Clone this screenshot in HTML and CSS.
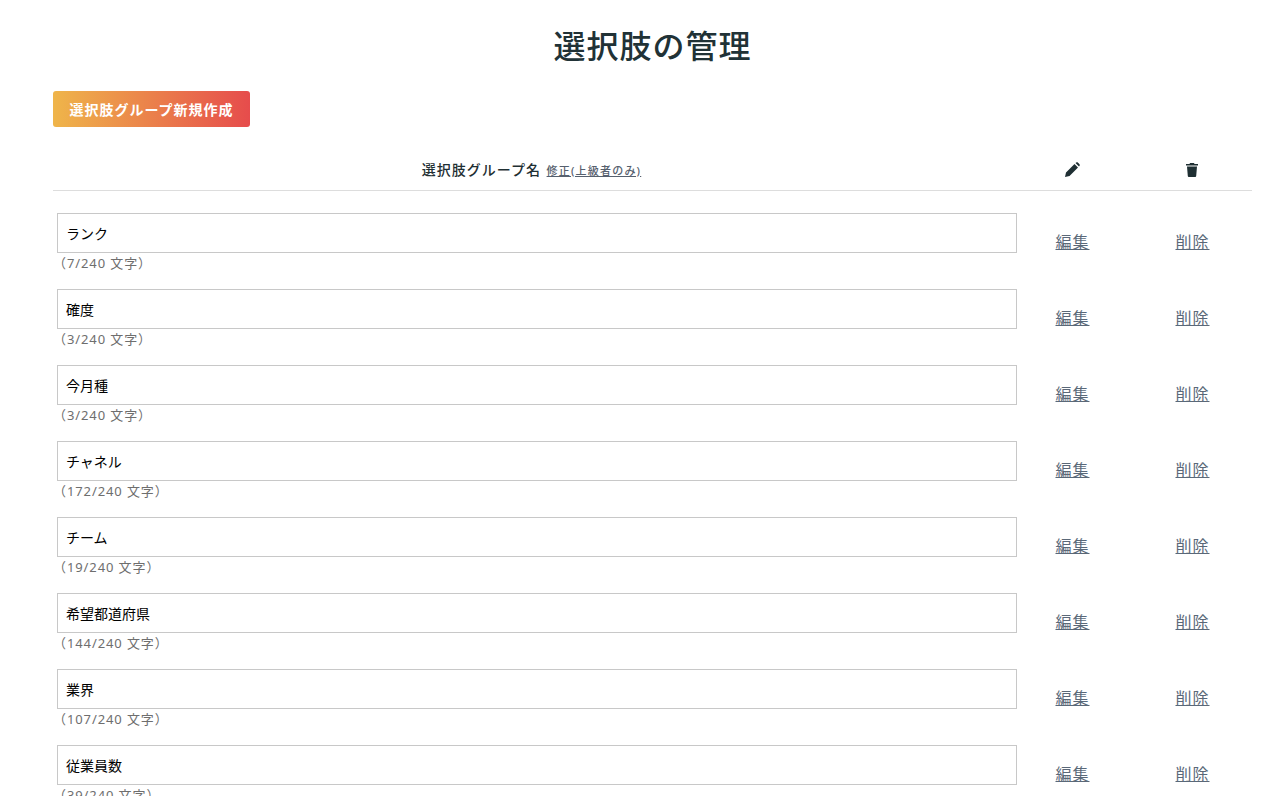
FILE: index.html
```html
<!DOCTYPE html>
<html lang="ja">
<head>
    <meta charset="UTF-8">
    <meta name="viewport" content="width=device-width, initial-scale=1.0">
    <title>選択肢の管理</title>
    <link rel="stylesheet" href="styles.css">
</head>
<body>
    <div class="container">
        <h1 class="page-title">選択肢の管理</h1>
        <a href="#" class="btn-create">選択肢グループ新規作成</a>

        <div class="head-row">
            <div class="head-name">選択肢グループ名 <a href="#" class="head-link">修正(上級者のみ)</a></div>
            <div class="head-icon">
                <svg width="16" height="16" viewBox="0 0 16 16"><path d="M1 15l1-4.5 8.5-8.5 3.5 3.5L5.5 14 1 15zM11.5 1l.8-.6c.5-.3 1.1-.3 1.5.1l1.7 1.7c.4.4.4 1 .1 1.5L15 4.5z"/></svg>
            </div>
            <div class="head-icon">
                <svg width="16" height="16" viewBox="0 0 16 16"><path d="M6 1h4l.5 1H14v1.5H2V2h3.5zM3 4.5h10l-.8 9.6a1 1 0 0 1-1 .9H4.8a1 1 0 0 1-1-.9z"/></svg>
            </div>
        </div>

        <div class="row">
            <div class="name-cell">
                <input class="name-input" type="text" value="ランク">
                <div class="count">（7/240 文字）</div>
            </div>
            <a href="#" class="action">編集</a>
            <a href="#" class="action">削除</a>
        </div>
        <div class="row">
            <div class="name-cell">
                <input class="name-input" type="text" value="確度">
                <div class="count">（3/240 文字）</div>
            </div>
            <a href="#" class="action">編集</a>
            <a href="#" class="action">削除</a>
        </div>
        <div class="row">
            <div class="name-cell">
                <input class="name-input" type="text" value="今月種">
                <div class="count">（3/240 文字）</div>
            </div>
            <a href="#" class="action">編集</a>
            <a href="#" class="action">削除</a>
        </div>
        <div class="row">
            <div class="name-cell">
                <input class="name-input" type="text" value="チャネル">
                <div class="count">（172/240 文字）</div>
            </div>
            <a href="#" class="action">編集</a>
            <a href="#" class="action">削除</a>
        </div>
        <div class="row">
            <div class="name-cell">
                <input class="name-input" type="text" value="チーム">
                <div class="count">（19/240 文字）</div>
            </div>
            <a href="#" class="action">編集</a>
            <a href="#" class="action">削除</a>
        </div>
        <div class="row">
            <div class="name-cell">
                <input class="name-input" type="text" value="希望都道府県">
                <div class="count">（144/240 文字）</div>
            </div>
            <a href="#" class="action">編集</a>
            <a href="#" class="action">削除</a>
        </div>
        <div class="row">
            <div class="name-cell">
                <input class="name-input" type="text" value="業界">
                <div class="count">（107/240 文字）</div>
            </div>
            <a href="#" class="action">編集</a>
            <a href="#" class="action">削除</a>
        </div>
        <div class="row">
            <div class="name-cell">
                <input class="name-input" type="text" value="従業員数">
                <div class="count">（39/240 文字）</div>
            </div>
            <a href="#" class="action">編集</a>
            <a href="#" class="action">削除</a>
        </div>
    </div>
</body>
</html>
```

FILE: styles.css
```css
* {
    box-sizing: border-box;
}

html,
body {
    height: 796px;
    overflow: hidden;
}

body {
    margin: 0;
    font-family: "Noto Sans", "Noto Sans CJK JP", sans-serif;
    color: #1f2f33;
    background: #fff;
}

.container {
    width: 1199px;
    margin-left: 53px;
}

.page-title {
    margin: 0;
    padding-top: 24px;
    height: 91px;
    font-size: 32px;
    line-height: 44px;
    font-weight: 500;
    letter-spacing: 1px;
    text-align: center;
    color: #213236;
}

.btn-create {
    display: inline-block;
    width: 197px;
    height: 36px;
    line-height: 38px;
    text-align: center;
    font-size: 14px;
    font-weight: 700;
    letter-spacing: 1px;
    color: #fff;
    text-decoration: none;
    border-radius: 3px;
    background: linear-gradient(90deg, #efb54a, #e64c4c);
}

.head-row {
    display: grid;
    grid-template-columns: 959px 120px 120px;
    align-items: center;
    height: 46px;
    margin-top: 18px;
    padding-top: 2px;
    border-bottom: 1px solid #ddd;
}

.head-name {
    text-align: center;
    font-size: 14px;
    font-weight: 500;
    letter-spacing: 1px;
    padding-right: 2px;
}

.head-link {
    margin-left: 1px;
    font-size: 11px;
    font-weight: 500;
    letter-spacing: 1.2px;
    color: #56606e;
}

.head-icon {
    display: flex;
    justify-content: center;
    padding-top: 2px;
}

.head-icon svg {
    fill: #1f2f33;
}

.row {
    display: grid;
    grid-template-columns: 959px 120px 120px;
    height: 76px;
}

.head-row + .row {
    margin-top: 22px;
}

.name-cell {
    padding-left: 4px;
}

.name-input {
    display: block;
    width: 960px;
    height: 40px;
    padding: 0 8px;
    border: 1px solid #c8c8c8;
    font-family: inherit;
    font-size: 14px;
    color: #000;
    outline: none;
}

.count {
    margin: 1px 0 0 -4px;
    font-size: 13px;
    line-height: 19px;
    letter-spacing: 0.9px;
    color: #6e6e6e;
}

.action {
    align-self: start;
    margin: 16px 0 0 1px;
    justify-self: center;
    font-size: 16px;
    line-height: 26px;
    letter-spacing: 1px;
    color: #5a6878;
}
```
